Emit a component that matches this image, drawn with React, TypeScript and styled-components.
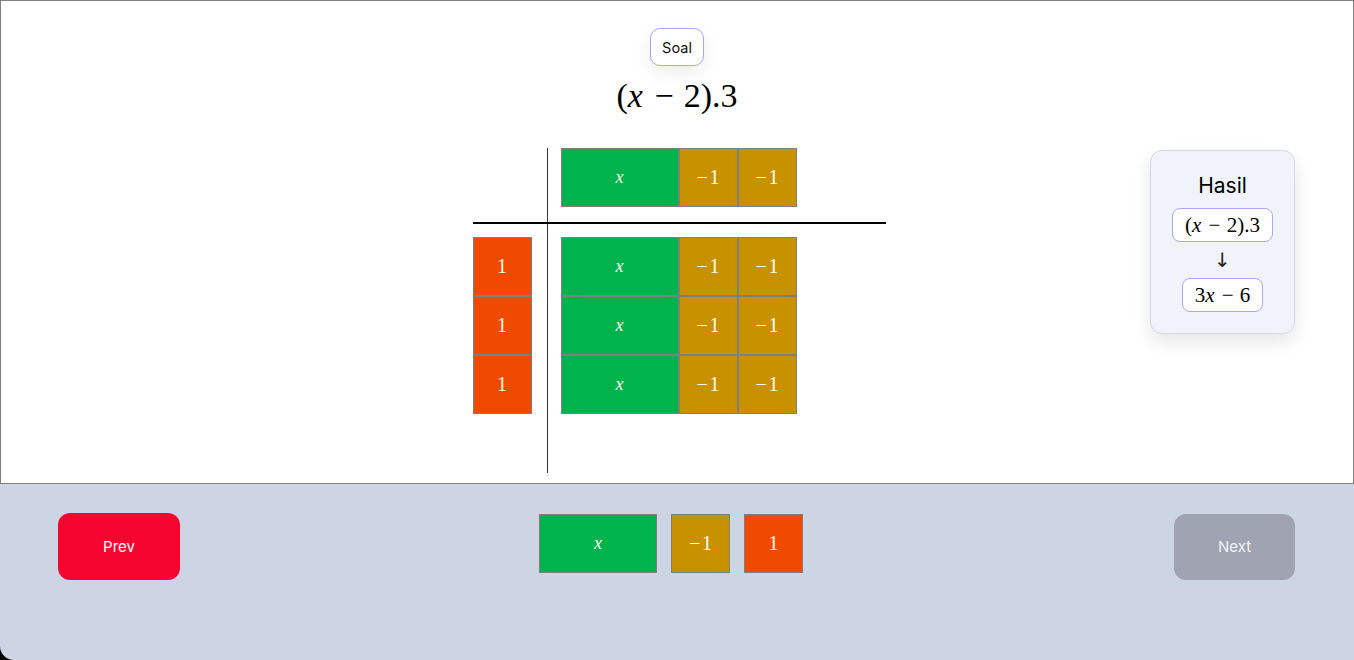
import React from "react";
import styled, { createGlobalStyle } from "styled-components";

const Global = createGlobalStyle`
  html, body { margin: 0; padding: 0; background: #000; }
  body { font-family: Inter, "Noto Sans", sans-serif; }
  *, *::before, *::after { box-sizing: border-box; }
`;

const Page = styled.div`
  width: 1354px;
  height: 660px;
  overflow: hidden;
  display: flex;
  flex-direction: column;
`;

const Stage = styled.section`
  height: 484px;
  flex: none;
  background: #fff;
  border: 1px solid #808080;
  display: flex;
  flex-direction: column;
  padding: 27px 58px 0;
`;

const Header = styled.header`
  display: flex;
  flex-direction: column;
  align-items: center;
`;

const Pill = styled.button`
  height: 38px;
  padding: 0 11px;
  border-radius: 10px;
  border: 1px solid #aaa5f7;
  background: #fff;
  font: 400 14.5px Inter, sans-serif;
  color: #111;
  box-shadow: 0 6px 18px rgba(0, 0, 0, 0.08);
`;

const Title = styled.h1`
  margin: 8px 0 0;
  font: 400 34px/44px "Liberation Serif", serif;
  color: #000;
`;

const MathText = styled.span`
  font-family: "Liberation Serif", serif;
  white-space: nowrap;
`;

const Var = styled.i`
  font-style: italic;
  margin-right: 0.04em;
`;

const Op = styled.span`
  margin: 0 0.3em;
`;

const Workspace = styled.div`
  margin-top: 30px;
  display: grid;
  grid-template-columns: 1fr auto 1fr;
  align-items: start;
`;

const Board = styled.div`
  grid-column: 2;
  display: grid;
  grid-template-columns: 74px 339px;
  transform: translateX(2px);
`;

const Corner = styled.div``;

const TopCell = styled.div`
  border-left: 1px solid #333;
  padding: 0 0 15px 13px;
`;

const Divider = styled.div`
  grid-column: 1 / -1;
  height: 2px;
  background: #000;
`;

const SideCell = styled.div`
  padding-top: 13px;
  display: flex;
  flex-direction: column;
`;

const BodyCell = styled.div`
  border-left: 1px solid #333;
  padding: 13px 0 59px 13px;
  display: flex;
  flex-direction: column;
`;

const TileRow = styled.div`
  display: flex;
`;

type Kind = "x" | "neg" | "one";

const tileColor: Record<Kind, string> = {
  x: "#00b34c",
  neg: "#c89100",
  one: "#f04a00",
};

const Tile = styled.div<{ $kind: Kind }>`
  width: ${(p) => (p.$kind === "x" ? 118 : 59)}px;
  height: 59px;
  flex: none;
  background: ${(p) => tileColor[p.$kind]};
  border: 1px solid #7f7f7f;
  display: flex;
  align-items: center;
  justify-content: center;
  color: #fffdf0;
  font: 400 ${(p) => (p.$kind === "x" ? 18 : 20)}px "Liberation Serif", serif;
  font-style: ${(p) => (p.$kind === "x" ? "italic" : "normal")};
`;

const MinusSign = styled.span`
  margin-right: 0.08em;
`;

const ResultCard = styled.aside`
  grid-column: 3;
  justify-self: end;
  margin-top: 2px;
  width: 145px;
  height: 184px;
  background: #f0f3f9;
  border: 1px solid #d2d9ea;
  border-radius: 12px;
  box-shadow: 0 8px 18px rgba(0, 0, 0, 0.1);
  display: flex;
  flex-direction: column;
  align-items: center;
  padding-top: 23px;
`;

const CardTitle = styled.h2`
  margin: 0 0 10px;
  font: 400 21px/24px Inter, sans-serif;
  color: #000;
`;

const ExprBox = styled.div`
  height: 34px;
  padding: 0 12px;
  background: #fff;
  border: 1px solid #aaa5f7;
  border-radius: 8px;
  display: flex;
  align-items: center;
  font: 400 21px "Liberation Serif", serif;
  color: #000;
`;

const Arrow = styled.div`
  font: 400 20px/36px "DejaVu Sans", sans-serif;
  color: #222;
`;

const Tray = styled.footer`
  height: 176px;
  flex: none;
  background: #cdd4e3;
  border-bottom-left-radius: 14px;
  display: flex;
  justify-content: space-between;
  align-items: flex-start;
  padding: 29px 59px 0 58px;
`;

const NavButton = styled.button<{ $primary?: boolean }>`
  width: ${(p) => (p.$primary ? 122 : 121)}px;
  height: ${(p) => (p.$primary ? 67 : 66)}px;
  margin-top: ${(p) => (p.$primary ? 0 : 1)}px;
  padding: 0 0 ${(p) => (p.$primary ? 0 : 2)}px;
  border: none;
  border-radius: 12px;
  background: ${(p) => (p.$primary ? "#f5052f" : "#a0a3b2")};
  color: ${(p) => (p.$primary ? "#fff" : "#f2f3f7")};
  font: 400 15px Inter, sans-serif;
`;

const Palette = styled.div`
  display: flex;
  gap: 14px;
  margin-top: 1px;
  transform: translateX(-6px);
`;

const NegOne = () => (
  <>
    <MinusSign>−</MinusSign>1
  </>
);

const rowTiles = (
  <>
    <Tile $kind="x">x</Tile>
    <Tile $kind="neg">
      <NegOne />
    </Tile>
    <Tile $kind="neg">
      <NegOne />
    </Tile>
  </>
);

export default function App() {
  return (
    <>
      <Global />
      <Page>
        <Stage>
          <Header>
            <Pill>Soal</Pill>
            <Title>
              <MathText>
                (<Var>x</Var>
                <Op>−</Op>2).3
              </MathText>
            </Title>
          </Header>
          <Workspace>
            <Board>
              <Corner />
              <TopCell>
                <TileRow>{rowTiles}</TileRow>
              </TopCell>
              <Divider />
              <SideCell>
                <Tile $kind="one">1</Tile>
                <Tile $kind="one">1</Tile>
                <Tile $kind="one">1</Tile>
              </SideCell>
              <BodyCell>
                <TileRow>{rowTiles}</TileRow>
                <TileRow>{rowTiles}</TileRow>
                <TileRow>{rowTiles}</TileRow>
              </BodyCell>
            </Board>
            <ResultCard>
              <CardTitle>Hasil</CardTitle>
              <ExprBox>
                <MathText>
                  (<Var>x</Var>
                  <Op>−</Op>2).3
                </MathText>
              </ExprBox>
              <Arrow>↓</Arrow>
              <ExprBox>
                <MathText>
                  3<Var>x</Var>
                  <Op>−</Op>6
                </MathText>
              </ExprBox>
            </ResultCard>
          </Workspace>
        </Stage>
        <Tray>
          <NavButton $primary>Prev</NavButton>
          <Palette>
            <Tile $kind="x">x</Tile>
            <Tile $kind="neg">
              <NegOne />
            </Tile>
            <Tile $kind="one">1</Tile>
          </Palette>
          <NavButton>Next</NavButton>
        </Tray>
      </Page>
    </>
  );
}
